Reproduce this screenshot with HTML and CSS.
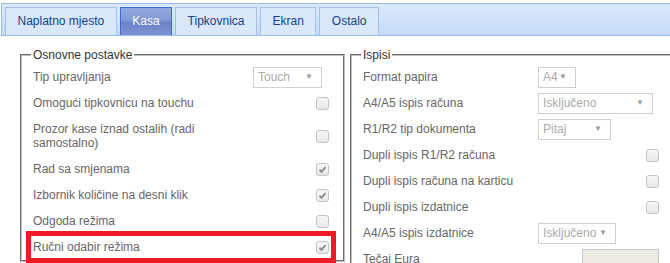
FILE: index.html
```html
<!DOCTYPE html>
<html lang="hr">
<head>
<meta charset="utf-8">
<title>Postavke</title>
<link rel="stylesheet" href="styles.css">
</head>
<body>
<div class="tabbar">
  <div class="tab">Naplatno mjesto</div>
  <div class="tab tab-active">Kasa</div>
  <div class="tab">Tipkovnica</div>
  <div class="tab">Ekran</div>
  <div class="tab">Ostalo</div>
</div>
<div class="panels">
  <fieldset class="group group-left">
    <legend>Osnovne postavke</legend>
    <div class="row">
      <span class="label">Tip upravljanja</span>
      <span class="ctrl"><span class="select sel-touch"><span>Touch</span><span class="arrow">▼</span></span></span>
    </div>
    <div class="row">
      <span class="label">Omogući tipkovnicu na touchu</span>
      <span class="ctrl"><span class="check"></span></span>
    </div>
    <div class="row">
      <span class="label">Prozor kase iznad ostalih (radi samostalno)</span>
      <span class="ctrl"><span class="check"></span></span>
    </div>
    <div class="row">
      <span class="label">Rad sa smjenama</span>
      <span class="ctrl"><span class="check"><svg viewBox="0 0 13 13" class="tick"><path d="M3 6.8 L5.3 9.2 L10 3.6"/></svg></span></span>
    </div>
    <div class="row">
      <span class="label">Izbornik količine na desni klik</span>
      <span class="ctrl"><span class="check"><svg viewBox="0 0 13 13" class="tick"><path d="M3 6.8 L5.3 9.2 L10 3.6"/></svg></span></span>
    </div>
    <div class="row">
      <span class="label">Odgoda režima</span>
      <span class="ctrl"><span class="check"></span></span>
    </div>
    <div class="row row-marked">
      <span class="label">Ručni odabir režima</span>
      <span class="ctrl"><span class="check"><svg viewBox="0 0 13 13" class="tick"><path d="M3 6.8 L5.3 9.2 L10 3.6"/></svg></span></span>
    </div>
  </fieldset>
  <fieldset class="group group-right">
    <legend>Ispisi</legend>
    <div class="row">
      <span class="label">Format papira</span>
      <span class="ctrl"><span class="select sel-a4"><span>A4</span><span class="arrow">▼</span></span></span>
    </div>
    <div class="row">
      <span class="label">A4/A5 ispis računa</span>
      <span class="ctrl"><span class="select sel-iskl"><span>Isključeno</span><span class="arrow">▼</span></span></span>
    </div>
    <div class="row">
      <span class="label">R1/R2 tip dokumenta</span>
      <span class="ctrl"><span class="select sel-pitaj"><span>Pitaj</span><span class="arrow">▼</span></span></span>
    </div>
    <div class="row">
      <span class="label">Dupli ispis R1/R2 računa</span>
      <span class="ctrl"><span class="check"></span></span>
    </div>
    <div class="row">
      <span class="label">Dupli ispis računa na karticu</span>
      <span class="ctrl"><span class="check"></span></span>
    </div>
    <div class="row">
      <span class="label">Dupli ispis izdatnice</span>
      <span class="ctrl"><span class="check"></span></span>
    </div>
    <div class="row">
      <span class="label">A4/A5 ispis izdatnice</span>
      <span class="ctrl"><span class="select sel-iskl2"><span>Isključeno</span><span class="arrow">▼</span></span></span>
    </div>
    <div class="row">
      <span class="label">Tečaj Eura</span>
      <span class="ctrl"><span class="input"></span></span>
    </div>
  </fieldset>
</div>
</body>
</html>
```
FILE: styles.css
```css
html, body {
  margin: 0;
  padding: 0;
  background: #fff;
  overflow: hidden;
}
body {
  font-family: "Liberation Sans", Arial, sans-serif;
  font-size: 12px;
  color: #666;
  width: 670px;
  height: 263px;
}

/* tabs */
.tabbar {
  margin: 3px -20px 0 1px;
  height: 28px;
  padding: 3px 0 0 3px;
  border: 1px solid #99bbe8;
  border-right: none;
  background: linear-gradient(#dce9fa, #c3daf8);
  display: flex;
  align-items: flex-end;
}
.tab {
  height: 27px;
  line-height: 27px;
  padding: 0 11.5px;
  margin-right: 3px;
  border: 1px solid #a9bfe3;
  border-bottom: none;
  background: #d8e7fa;
  color: #15428b;
  white-space: nowrap;
}
.tab-active {
  border-color: #3c6dd6;
  color: #fff;
  background: linear-gradient(#93a8df 0%, #8199d6 45%, #6a82c8 55%, #7d93d3 100%);
}

/* panels */
.panels {
  display: flex;
  align-items: flex-start;
  gap: 5px;
  margin: 12px 0 0 20px;
}
.group {
  box-sizing: border-box;
  margin: 0;
  border: 2px groove #c0c0c0;
  padding: 2px 14px 0 11px;
  min-width: 0;
  flex: none;
}
.group legend {
  padding: 0 2px;
  margin-left: -2px;
  line-height: 14px;
  color: #333;
}
.group-left { width: 325px; }
.group-right { width: 335px; padding-right: 24px; }

.row {
  display: flex;
  align-items: center;
  padding: 6px 0;
  line-height: 14px;
  position: relative;
}
.label { flex: 0 0 220px; }
.group-right .label { flex-basis: 175px; }
.ctrl {
  flex: 1;
  display: flex;
  align-items: center;
  min-width: 0;
}

.select {
  box-sizing: border-box;
  height: 21px;
  border: 1px solid #cfcfcf;
  display: flex;
  align-items: center;
  justify-content: space-between;
  padding: 0 8px 0 4px;
  color: #aaa;
  background: #fff;
  margin: -4px 0;
}
.arrow { font-size: 8px; color: #999; }
.sel-touch { width: 69px; }
.sel-a4 { width: 38px; }
.sel-iskl { width: 115px; }
.sel-pitaj { width: 73px; }
.sel-iskl2 { width: 78px; }

.check {
  margin-left: auto;
  box-sizing: border-box;
  width: 13px;
  height: 13px;
  border: 1px solid #c4c4c4;
  border-radius: 3px;
  background: linear-gradient(#f7f7f7, #e8e8e8);
  display: flex;
  align-items: center;
  justify-content: center;
}
.tick {
  width: 11px;
  height: 11px;
}
.tick path {
  fill: none;
  stroke: #8a8a8a;
  stroke-width: 2.2;
}

.input {
  margin-left: auto;
  box-sizing: border-box;
  width: 77px;
  height: 21px;
  border: 1px solid #c8c8c8;
  background: #ebebe4;
  margin-top: -4px;
  margin-bottom: -4px;
}

.row-marked::after {
  content: "";
  position: absolute;
  left: -7px;
  right: -7px;
  top: -3px;
  bottom: -3px;
  border: 5px solid #ed1c24;
}
```
